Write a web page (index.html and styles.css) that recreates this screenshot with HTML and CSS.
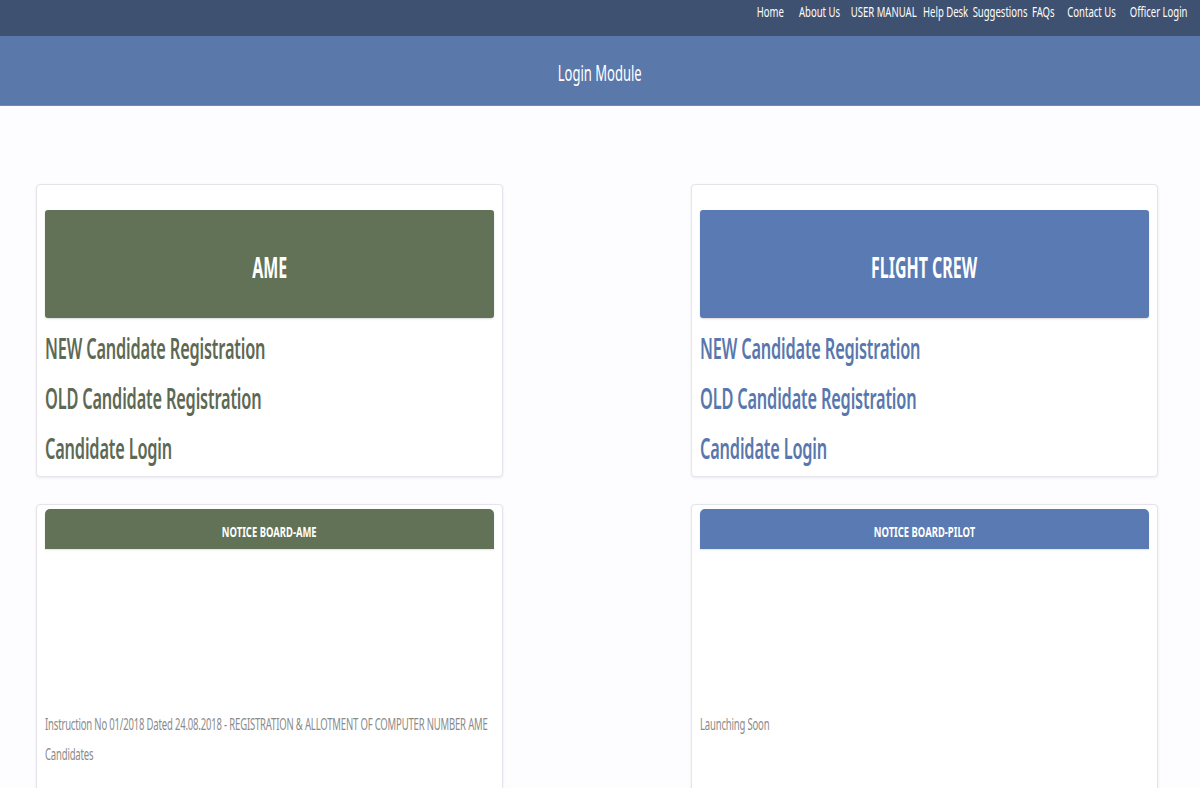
FILE: index.html
```html
<!DOCTYPE html>
<html lang="en">
<head>
<meta charset="utf-8">
<title>Login Module</title>
<link rel="stylesheet" href="styles.css">
</head>
<body>
<nav class="topnav">
  <div class="navlinks">
    <a href="#">Home</a>
    <a href="#" class="g-about">About Us</a>
    <a href="#" class="g-manual">USER MANUAL</a>
    <a href="#" class="g-help">Help Desk</a>
    <a href="#">Suggestions</a>
    <a href="#">FAQs</a>
    <a href="#" class="g-contact">Contact Us</a>
    <a href="#" class="g-officer">Officer Login</a>
  </div>
</nav>
<header class="subheader"><span class="title">Login Module</span></header>
<main class="grid">
  <section class="card login ame">
    <div class="banner"><span>AME</span></div>
    <a href="#" class="link">NEW Candidate Registration</a>
    <a href="#" class="link">OLD Candidate Registration</a>
    <a href="#" class="link">Candidate Login</a>
  </section>
  <section class="card login crew">
    <div class="banner"><span>FLIGHT CREW</span></div>
    <a href="#" class="link">NEW Candidate Registration</a>
    <a href="#" class="link">OLD Candidate Registration</a>
    <a href="#" class="link">Candidate Login</a>
  </section>
  <section class="card notice ame">
    <div class="nhead"><span>NOTICE BOARD-AME</span></div>
    <div class="nbody">Instruction No 01/2018 Dated 24.08.2018 - REGISTRATION &amp; ALLOTMENT OF COMPUTER NUMBER AME Candidates</div>
  </section>
  <section class="card notice crew">
    <div class="nhead"><span>NOTICE BOARD-PILOT</span></div>
    <div class="nbody">Launching Soon</div>
  </section>
</main>
</body>
</html>
```
FILE: styles.css
```css
html, body {
  margin: 0;
  padding: 0;
}
body {
  background: #fdfdff;
  font-family: "Noto Sans", "Open Sans", sans-serif;
  color: #333;
  height: 788px;
  overflow: hidden;
}
a { text-decoration: none; }

/* top navigation */
.topnav {
  height: 36px;
  background: #3f5170;
  display: flex;
  justify-content: flex-end;
  align-items: flex-start;
  padding: 1px 12px 0 0;
  box-sizing: border-box;
}
.navlinks {
  display: flex;
  gap: 7px;
  transform: scaleX(0.635);
  transform-origin: right center;
}
.navlinks a {
  color: #ffffff;
  font-size: 15px;
  line-height: 20px;
  white-space: nowrap;
}
.navlinks .g-about { margin-left: 17px; }
.navlinks .g-manual { margin-left: 10px; }
.navlinks .g-help { margin-left: 3px; }
.navlinks .g-contact { margin-left: 13px; }
.navlinks .g-officer { margin-left: 15px; }

/* page title band */
.subheader {
  height: 70px;
  background: #5a78a9;
  color: #ffffff;
  display: flex;
  align-items: center;
  justify-content: center;
  padding-top: 4px;
  box-sizing: border-box;
  border-bottom: 1px solid #7489ad;
}
.title {
  display: inline-block;
  font-size: 21px;
  transform: scaleX(0.62);
}

/* cards */
.grid {
  display: grid;
  grid-template-columns: 467px 467px;
  justify-content: space-between;
  row-gap: 27px;
  padding: 78px 42px 0 36px;
}
.card {
  background: #ffffff;
  border: 1px solid #e4e4ea;
  border-radius: 4px;
  box-shadow: 0 1px 3px rgba(0, 0, 0, 0.08);
  padding: 0 8px;
}

.login {
  padding-top: 25px;
  padding-bottom: 3px;
  display: flex;
  flex-direction: column;
  align-items: flex-start;
}
.banner {
  align-self: stretch;
  height: 108px;
  border-radius: 3px;
  display: flex;
  align-items: center;
  justify-content: center;
  color: #ffffff;
  padding-top: 6px;
  box-sizing: border-box;
  box-shadow: 0 1px 2px rgba(0, 0, 0, 0.15);
  margin-bottom: 5px;
}
.banner span {
  display: inline-block;
  font-size: 28px;
  font-weight: 700;
  transform: scaleX(0.57);
  white-space: nowrap;
}
.link {
  display: inline-block;
  font-size: 28px;
  font-weight: 600;
  line-height: 50px;
  letter-spacing: -0.3px;
  white-space: nowrap;
  transform: scaleX(0.583);
  transform-origin: left center;
}
.ame .banner, .ame .nhead { background: #617256; }
.crew .banner, .crew .nhead { background: #5a7ab3; }
.ame .link { color: #5d6954; }
.crew .link { color: #5977ac; }

.notice {
  padding-top: 4px;
  height: 300px;
}
.nhead {
  height: 40px;
  border-radius: 5px 5px 0 0;
  color: #ffffff;
  display: flex;
  align-items: center;
  justify-content: center;
  padding-top: 4px;
  box-sizing: border-box;
  box-shadow: 0 1px 2px rgba(0, 0, 0, 0.12);
}
.nhead span {
  display: inline-block;
  font-size: 15px;
  font-weight: 700;
  white-space: nowrap;
  transform: scaleX(0.63);
}
.nbody {
  width: 755px;
  padding-top: 160px;
  color: #8a8a8a;
  font-size: 16px;
  line-height: 30px;
  letter-spacing: -0.3px;
  transform: scaleX(0.595);
  transform-origin: left top;
}
```
